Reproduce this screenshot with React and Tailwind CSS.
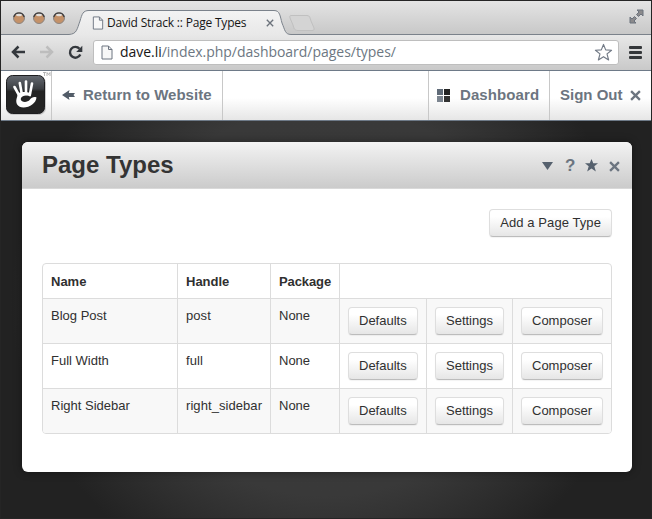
const sans = "font-['Liberation_Sans',Arial,sans-serif]";
const chromeFont = "font-['Open_Sans','Noto_Sans',sans-serif]";

function PageIcon({ className }) {
  return (
    <svg className={className} viewBox="0 0 12 15" fill="none">
      <path d="M1 1H7.5L11 4.5V14H1Z" fill="#f7f7f7" stroke="#6c7480" />
      <path d="M7.5 1V4.5H11" stroke="#6c7480" />
    </svg>
  );
}

function CrossIcon({ className, w = 2.4 }) {
  return (
    <svg className={className} viewBox="0 0 10 10" stroke="currentColor" strokeWidth={w}>
      <path d="M1 1L9 9M9 1L1 9" />
    </svg>
  );
}

function TrafficLight() {
  return (
    <svg className="size-3.5 shrink-0" viewBox="0 0 14 14">
      <circle cx="7" cy="7" r="5.5" fill="#c49168" stroke="#8c8580" />
      <path d="M1.800 6A5.400 5.400 0 0 1 12.200 6" stroke="#3c3e42" strokeWidth="1.300" fill="none" />
      <ellipse cx="7" cy="4" rx="3" ry="1.300" fill="#e3dfdb" />
    </svg>
  );
}

function TabStrip() {
  return (
    <div className="relative flex h-[33px] shrink-0 bg-gradient-to-b from-[#e4e4e4] to-[#c8c8c8]">
      <svg className="absolute left-0 top-0 h-[34px] w-[650px]" viewBox="0 0 650 34" fill="none">
        <defs>
          <linearGradient id="tab" x1="0" y1="0" x2="0" y2="1">
            <stop offset="0" stopColor="#f3f3f3" />
            <stop offset="1" stopColor="#e8e8e8" />
          </linearGradient>
        </defs>
        <path d="M68 34C76 33 76 28 79 20C81 13 82 9.500 88 9.500H273C279 9.500 279 15 281 22C284 29 284 33 290 34Z" fill="url(#tab)" />
        <path
          d="M0 33.500H68C76 33 76 28 79 20C81 13 82 9.500 88 9.500H273C279 9.500 279 15 281 22C284 29 284 33.500 290 33.500H650"
          stroke="#7b828b"
        />
        <path d="M290 14.500H306C309 14.500 309 17 310 20L313 27C313.500 29 312.500 29.500 311 29.500H297C293 29.500 293 27 292 24L289 17C288.500 15 289 14.500 290 14.500Z" fill="#d4d4d4" stroke="#c0c0c0" />
      </svg>
      <div className="relative flex w-full items-start">
        <div className="flex gap-[6px] pl-[11px] pt-[10px]">
          <TrafficLight />
          <TrafficLight />
          <TrafficLight />
        </div>
        <PageIcon className="ml-[26px] mt-[15px] h-[14px] w-3" />
        <span className={`${chromeFont} ml-[3px] mt-[14px] w-[150px] whitespace-nowrap text-[12px] leading-4 tracking-[-0.2px] text-[#161616]`}>
          David Strack :: Page Types
        </span>
        <CrossIcon className="ml-[9px] mt-[18px] size-[8px] text-[#6b727b]" w={1.7} />
        <svg className="ml-auto mr-[7px] mt-2 size-[15px]" viewBox="0 0 15 15" fill="#8b8a8c" stroke="#6b727d">
          <path d="M8 1H14V7L12 5L9.500 7.500L7.500 5.500L10 3Z" />
          <path d="M7 14H1V8L3 10L5.500 7.500L7.500 9.500L5 12Z" />
        </svg>
      </div>
    </div>
  );
}

function AddressBar() {
  return (
    <div className="flex h-9 shrink-0 items-center border-t border-[#f7f7f7] bg-gradient-to-b from-[#e8e8e8] to-[#c9c9c9] pb-px">
      <svg className="ml-[10px] h-[14px] w-[15px]" viewBox="0 0 15 14" fill="none" stroke="#34383d" strokeWidth="2.500">
        <path d="M14 7H2M7.500 1.500L2 7L7.500 12.500" />
      </svg>
      <svg className="ml-[13px] h-[14px] w-[15px]" viewBox="0 0 15 14" fill="none" stroke="#bdbdbd" strokeWidth="2.500">
        <path d="M1 7H13M7.500 1.500L13 7L7.500 12.500" />
      </svg>
      <svg className="ml-[14px] size-[15px]" viewBox="0 0 15 15" fill="none">
        <path d="M12.300 9.500A5.400 5.400 0 1 1 11.500 3.800" stroke="#34383d" strokeWidth="2.400" />
        <path d="M14.300 0.800V7H8.200Z" fill="#34383d" />
      </svg>
      <div className="ml-[10px] flex h-[25px] w-[526px] items-center rounded-[3px] border border-[#bebebe] bg-white pl-[7px]">
        <PageIcon className="h-[15px] w-3" />
        <span className={`${chromeFont} ml-[7px] whitespace-nowrap text-[14px] leading-5 tracking-[-0.03px] text-[#6d7782]`}>
          <span className="text-[#161616]">dave.li</span>/index.php/dashboard/pages/types/
        </span>
        <svg className="ml-auto mr-[5px] size-[19px]" viewBox="0 0 20 20" fill="white" stroke="#727a86" strokeWidth="1.200" strokeLinejoin="round">
          <path d="M10 1.500L12.300 7.200L18.500 7.600L13.700 11.500L15.400 17.900L10 14.400L4.600 17.900L6.300 11.500L1.500 7.600L7.700 7.200Z" />
        </svg>
      </div>
      <div className="ml-[10px] flex w-[13px] flex-col gap-[2px]">
        <i className="h-[3px] rounded-[1px] bg-[#34373a]" />
        <i className="h-[3px] rounded-[1px] bg-[#34373a]" />
        <i className="h-[3px] rounded-[1px] bg-[#34373a]" />
      </div>
    </div>
  );
}

function HandLogo() {
  return (
    <svg className="h-[49px] w-[50px]" viewBox="0 0 50 49">
      <defs>
        <linearGradient id="logo" x1="0" y1="0" x2="0" y2="1">
          <stop offset="0" stopColor="#656a71" />
          <stop offset="0.350" stopColor="#3b3e42" />
          <stop offset="0.420" stopColor="#242424" />
        </linearGradient>
      </defs>
      <rect x="5" y="5" width="40" height="39" rx="7" fill="#c9c9c9" />
      <rect x="5.500" y="4.500" width="38" height="38" rx="6" fill="url(#logo)" stroke="#1d1d1f" />
      <g fill="none" stroke="white" strokeLinecap="round">
        <path d="M18.500 25L13.500 16" strokeWidth="2.600" />
        <path d="M20.800 23L18.800 12" strokeWidth="2.600" />
        <path d="M25 23V10.500" strokeWidth="2.600" />
        <path d="M28.800 24L31 12.500" strokeWidth="2.600" />
      </g>
      <path
        d="M17 22.500C20 20.500 27 20.500 30.200 22.500L29.500 25.500C26 23.500 19.500 25 19.800 28.500C20.200 31.500 26.500 31.800 28.800 28.800C30.500 26.500 33 25.500 35.500 26.500C35 32 29 36.500 22.500 36.500C16.500 36.500 14.500 32 15.500 28Z"
        fill="white"
      />
      <path d="M42 1.500H45M43.500 1.500V5M46 5V1.500L47.500 3.500L49 1.500V5" stroke="#9a9a9a" strokeWidth=".7" fill="none" />
    </svg>
  );
}

function DashboardNav() {
  return (
    <nav className={`${sans} flex h-[51px] shrink-0 border-y border-[#6e7a88] bg-gradient-to-b from-white from-55% to-[#e6e6e6] text-[15px] font-bold text-[#6c7580]`}>
      <div className="w-[50px] shrink-0">
        <HandLogo />
      </div>
      <a className="flex w-[172px] items-center whitespace-nowrap border-x border-[#c8c8c8] pl-[10px]">
        <svg className="mb-px h-[10px] w-[13px]" viewBox="0 0 13 10" fill="#525c68">
          <path d="M0 5L7.500 0L6.800 3H13L11.500 5L13 7H6.800L7.500 10Z" />
        </svg>
        <span className="ml-[8px] tracking-[0.03px]">Return to Website</span>
      </a>
      <a className="ml-auto flex w-[122px] items-center border-x border-[#c8c8c8] pl-2">
        <span className="grid size-[13px] grid-cols-2 gap-px">
          <i className="bg-[#606b78]" />
          <i className="bg-[#242424]" />
          <i className="bg-[#7c8590]" />
          <i className="bg-[#333333]" />
        </span>
        <span className="ml-[10px] tracking-[0.1px]">Dashboard</span>
      </a>
      <a className="flex w-[101px] items-center whitespace-nowrap pl-[10px]">
        <span className="w-[62px]">Sign Out</span>
        <CrossIcon className="ml-[8px] size-[11px]" w={2.1} />
      </a>
    </nav>
  );
}

function Button({ children }) {
  return (
    <button className="flex h-7 items-center whitespace-nowrap rounded border border-[#dedede] border-b-[#bcbcbc] bg-gradient-to-b from-white from-25% to-[#e6e6e6] px-[10px] text-[13px] text-[#303030] shadow-[0_1px_1px_#0000000d]">
      {children}
    </button>
  );
}

const pageTypes = [
  { name: "Blog Post", handle: "post" },
  { name: "Full Width", handle: "full" },
  { name: "Right Sidebar", handle: "right_sidebar" },
];

function TypesTable() {
  return (
    <div className="mt-[26px] overflow-hidden rounded border border-[#dcdcdc] text-[13px] leading-[18px] text-[#303030]">
      <div className="grid h-[34px] grid-cols-[135px_93px_69px_1fr] divide-x divide-[#dcdcdc] font-bold">
        <div className="px-2 pt-[9px]">Name</div>
        <div className="px-2 pt-[9px]">Handle</div>
        <div className="px-2 pt-[9px] tracking-[-0.1px]">Package</div>
        <div />
      </div>
      {pageTypes.map((type) => (
        <div
          key={type.handle}
          className="grid h-[45px] grid-cols-[135px_93px_69px_87px_86px_1fr] divide-x divide-[#dcdcdc] border-t border-[#dcdcdc] odd:bg-white even:bg-[#f8f8f8]"
        >
          <div className="px-2 pt-2">{type.name}</div>
          <div className="px-2 pt-2 tracking-[0.07px]">{type.handle}</div>
          <div className="px-2 pt-2">None</div>
          <div className="px-2 pt-2"><Button>Defaults</Button></div>
          <div className="px-2 pt-2"><Button>Settings</Button></div>
          <div className="px-2 pt-2"><Button>Composer</Button></div>
        </div>
      ))}
    </div>
  );
}

function Panel() {
  return (
    <section className="ml-[21px] mt-[21px] h-[330px] w-[610px] overflow-hidden rounded-md bg-white shadow-[0_0_8px_#00000066]">
      <header className="flex h-[47px] items-center border-b border-[#d9d9d9] bg-gradient-to-b from-[#f3f3f3] to-[#cbcbcb] pl-5 pr-3">
        <h1 className="text-[24px] font-bold leading-7 text-[#343434]">Page Types</h1>
        <div className="ml-auto flex items-center pt-[2px] text-[#6c7580]">
          <svg className="h-2 w-[11px]" viewBox="0 0 11 8" fill="#56616e">
            <path d="M0 0H11L5.500 8Z" />
          </svg>
          <span className="ml-[12px] w-[10px] text-[17px] font-bold leading-4">?</span>
          <svg className="mb-px ml-[10px] size-[13px]" viewBox="0 0 24 24" fill="#56616e">
            <path d="M12 0L15.300 8H24L17.200 13.500L20 23L12 17.500L4 23L6.800 13.500L0 8H8.700Z" />
          </svg>
          <CrossIcon className="ml-[11px] size-[11px]" w={2.1} />
        </div>
      </header>
      <div className="px-5 pt-[20px]">
        <div className="flex justify-end tracking-[0.08px]">
          <Button>Add a Page Type</Button>
        </div>
        <TypesTable />
      </div>
    </section>
  );
}

export default function App() {
  return (
    <div className="flex h-[519px] w-[652px] flex-col overflow-hidden border border-[#252525] bg-[#232323]">
      <TabStrip />
      <AddressBar />
      <DashboardNav />
      <main className={`${sans} flex-1 bg-[radial-gradient(ellipse_315px_300px_at_325px_180px,#3a3a3a_0%,#393939_65%,#222222_100%)]`}>
        <Panel />
      </main>
    </div>
  );
}
